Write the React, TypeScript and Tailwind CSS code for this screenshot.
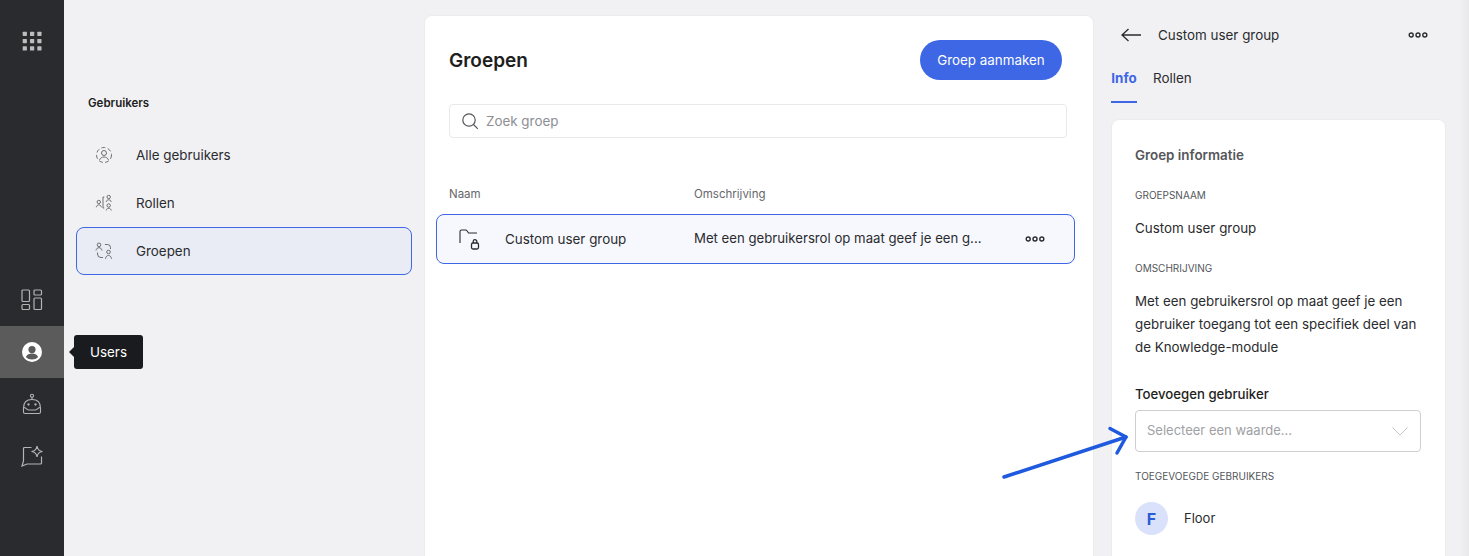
const FONT = "font-['Inter','Liberation_Sans',sans-serif]";

function Dots({ className = "" }: { className?: string }) {
  return (
    <svg width="20" height="6" viewBox="0 0 20 6" fill="none" stroke="#2a2b2e" strokeWidth="1.4" className={className}>
      <circle cx="3.2" cy="3" r="2" />
      <circle cx="10" cy="3" r="2" />
      <circle cx="16.8" cy="3" r="2" />
    </svg>
  );
}

function GridIcon() {
  return (
    <svg width="20" height="20" viewBox="0 0 20 20" fill="#bdbdbd">
      {[0, 7.3, 14.6].flatMap((y) =>
        [0, 7.3, 14.6].map((x) => <rect key={`${x}-${y}`} x={x + 0.7} y={y + 0.7} width="4.2" height="4.2" rx="0.6" />)
      )}
    </svg>
  );
}

function DashboardIcon() {
  return (
    <svg width="22" height="22" viewBox="0 0 22 22" fill="none" stroke="#b4b4b4" strokeWidth="1.2">
      <rect x="1" y="1" width="7.5" height="11.5" rx="1" />
      <rect x="13" y="1" width="7.5" height="5" rx="1" />
      <rect x="1" y="15.5" width="7.5" height="5" rx="1" />
      <rect x="13" y="9" width="7.5" height="11.5" rx="1" />
    </svg>
  );
}

function UserIcon() {
  return (
    <svg width="20" height="20" viewBox="0 0 20 20">
      <circle cx="10" cy="10" r="10" fill="#fff" />
      <circle cx="10" cy="7.6" r="3.6" fill="#5b5b5c" />
      <path d="M3.8 15c1-2.5 3.4-3.5 6.2-3.5s5.2 1 6.2 3.5C14.7 16.7 12.5 17.5 10 17.5S5.3 16.7 3.8 15Z" fill="#5b5b5c" />
    </svg>
  );
}

function BotIcon() {
  return (
    <svg width="20" height="22" viewBox="0 0 20 22" fill="none" stroke="#b4b4b4" strokeWidth="1.1">
      <circle cx="10" cy="2.8" r="1.6" />
      <path d="M10 4.4V6.5" />
      <path d="M1.5 15c0-5.500 3.200-8.500 8.500-8.500s8.500 3 8.500 8.500v4a1.500 1.500 0 0 1-1.500 1.500H3A1.500 1.500 0 0 1 1.500 19Z" />
      <path d="M1.500 14.500c3 0 3 2.500 5.500 2.500h6c2.500 0 2.500-2.500 5.500-2.500" />
      <circle cx="6.500" cy="11.500" r="0.600" fill="#b4b4b4" />
      <circle cx="13.500" cy="11.500" r="0.600" fill="#b4b4b4" />
    </svg>
  );
}

function SparkChatIcon() {
  return (
    <svg width="22" height="22" viewBox="0 0 22 22" fill="none" stroke="#b4b4b4" strokeWidth="1.2">
      <path d="M10.500 2.500h-7a1 1 0 0 0-1 1V16L1 21l5-2h13.500a1 1 0 0 0 1-1v-6.500" />
      <path d="M16 1c.4 3.200 2.300 5.100 5.500 5.500-3.200.4-5.100 2.300-5.500 5.500-.4-3.200-2.300-5.100-5.500-5.500 3.200-.4 5.100-2.300 5.500-5.500Z" />
    </svg>
  );
}

function AllUsersIcon() {
  return (
    <svg width="18" height="18" viewBox="0 0 18 18" fill="none" stroke="#606165" strokeWidth="0.9">
      <circle cx="9" cy="9" r="7.500" strokeDasharray="4 2.500" />
      <circle cx="9" cy="7" r="2.500" />
      <path d="M4.500 14c.8-2 2.500-3 4.500-3s3.700 1 4.500 3" />
    </svg>
  );
}

function RolesIcon() {
  return (
    <svg width="18" height="18" viewBox="0 0 18 18" fill="none" stroke="#606165" strokeWidth="0.9">
      <circle cx="3.800" cy="8" r="1.700" />
      <path d="M1.300 13.300c.3-1.600 1.200-2.400 2.500-2.400s2.200.8 2.500 2.400" />
      <path d="M9.300 3H8v11h1.300" />
      <circle cx="13.700" cy="3" r="1.700" />
      <path d="M11.200 8c.3-1.500 1.200-2.200 2.500-2.200s2.200.7 2.500 2.200" />
      <circle cx="13.700" cy="11.500" r="1.700" />
      <path d="M11.200 16.500c.3-1.500 1.200-2.200 2.500-2.200s2.200.7 2.500 2.200" />
    </svg>
  );
}

function GroupsIcon() {
  return (
    <svg width="18" height="18" viewBox="0 0 18 18" fill="none" stroke="#606165" strokeWidth="0.9">
      <circle cx="4" cy="2.800" r="1.800" />
      <path d="M1 8.500C1.300 6.500 2.500 5.700 4 5.700s2.700.8 3 2.800" />
      <circle cx="13.500" cy="10" r="1.800" />
      <path d="M10.500 16.800c.3-2.200 1.500-3.300 3-3.300s2.700 1.100 3 3.300" />
      <path d="M10 2.500h2.500a3 3 0 0 1 3 3V7" />
      <path d="M2.500 10.500V12a3.500 3.500 0 0 0 3.500 3.500h2" />
    </svg>
  );
}

function FolderLockIcon() {
  return (
    <svg width="22" height="22" viewBox="0 0 22 22" fill="none" stroke="#2a2b2e" strokeWidth="1.100">
      <path d="M1 15V3.500A1.500 1.500 0 0 1 2.500 2h4.200c.6 0 1 .3 1.300.8L9.500 5H18" />
      <rect x="12.500" y="15" width="7" height="6" rx="1.500" strokeWidth="1.300" />
      <path d="M14.200 15v-1.500a1.800 1.800 0 0 1 3.600 0V15" strokeWidth="1.300" />
    </svg>
  );
}

const NAV_ITEMS = [
  { label: "Alle gebruikers", icon: <AllUsersIcon /> },
  { label: "Rollen", icon: <RolesIcon /> },
  { label: "Groepen", icon: <GroupsIcon />, active: true },
];

function App() {
  return (
    <div className={`${FONT} relative flex h-[556px] w-[1469px] overflow-hidden bg-[#f1f1f4] text-[#2a2b2e]`}>
      {/* Rail */}
      <aside className="relative flex w-16 shrink-0 flex-col items-center bg-[#2a2b2e]">
        <div className="mt-[31px]">
          <GridIcon />
        </div>
        <div className="mt-[223px] flex h-[52px] w-full items-center justify-center">
          <DashboardIcon />
        </div>
        <div className="flex h-[52px] w-full items-center justify-center bg-[#5b5b5c]">
          <UserIcon />
        </div>
        <div className="flex h-[52px] w-full items-center justify-center">
          <BotIcon />
        </div>
        <div className="flex h-[52px] w-full items-center justify-center">
          <SparkChatIcon />
        </div>

        <div className="absolute left-[74px] top-[335px] z-10 flex h-[34px] w-[69px] items-center justify-center rounded-[3px] bg-[#1a1b1e] text-[13.4px] text-white">
          <span className="absolute -left-[5px] top-[12px] h-0 w-0 border-y-[5px] border-r-[5px] border-y-transparent border-r-[#1a1b1e]" />
          Users
        </div>
      </aside>

      {/* Section nav */}
      <nav className="w-[360px] shrink-0 pl-3 pr-3">
        <div className="pl-3 pt-[95px] text-[11.5px] leading-4 font-semibold text-[#1d1e20]">Gebruikers</div>
        <ul className="mt-[20px] flex flex-col">
          {NAV_ITEMS.map((item) => (
            <li
              key={item.label}
              className={`flex h-12 items-center gap-[23px] rounded-lg border pl-[18px] text-[13.4px] ${
                item.active ? "border-[#3d67e5] bg-[#e9ecf5]" : "border-transparent"
              }`}
            >
              {item.icon}
              {item.label}
            </li>
          ))}
        </ul>
      </nav>

      {/* Groups card */}
      <main className="mt-[15px] w-[670px] shrink-0 rounded-t-lg border border-b-0 border-[#ececee] bg-white px-3">
        <div className="flex items-center justify-between pl-3 pr-[19px] pt-[24px]">
          <h1 className="mt-[2px] text-[19px] leading-7 font-semibold text-[#1d1e20]">Groepen</h1>
          <button type="button" className="h-10 w-[142px] rounded-full bg-[#3d67e5] text-[13.4px] text-white">
            Groep aanmaken
          </button>
        </div>
        <div className="mx-3 mt-[24px] mr-[14px] flex h-[34px] items-center gap-[7px] rounded border border-[#e9e9eb] pl-[11px] text-[13.4px] text-[#8d8e92]">
          <svg width="18" height="18" viewBox="0 0 18 18" fill="none" stroke="#55565a" strokeWidth="1.200">
            <circle cx="8" cy="8" r="6.200" />
            <path d="m12.500 12.500 4.300 4.300" />
          </svg>
          Zoek groep
        </div>
        <div className="mt-[48px] flex pl-3 text-[11.500px] leading-4 text-[#66676b]">
          <span className="w-[245px]">Naam</span>
          <span>Omschrijving</span>
        </div>
        <div className="-ml-px mr-[6px] mt-[12px] flex h-[50px] items-center rounded-lg border border-[#3d67e5] bg-[#f7f8fe] pl-[22px] text-[13.4px]">
          <FolderLockIcon />
          <span className="ml-[24px] w-[189px]">Custom user group</span>
          <span className="w-[290px] whitespace-nowrap text-[13.2px]">Met een gebruikersrol op maat geef je een g...</span>
          <Dots className="ml-[41px]" />
        </div>
      </main>

      {/* Details panel */}
      <section className="flex-1 pl-[17px] pr-[23px]">
        <div className="flex items-center pt-[26px]">
          <svg width="20" height="14" viewBox="0 0 20 14" fill="none" stroke="#2a2b2e" strokeWidth="1.300" className="ml-[10px]">
            <path d="M20 7H1M7.500 1 1 7l6.500 6" />
          </svg>
          <span className="ml-[17px] text-[13.4px] leading-[18px]">Custom user group</span>
          <Dots className="ml-auto mr-[18px]" />
        </div>
        <div className="mt-[19px] flex gap-4 text-[13.4px]">
          <span className="flex h-10 w-[26px] items-start justify-center border-b-2 border-[#3d67e5] pt-[6px] leading-[18px] font-bold text-[#3d67e5]">
            Info
          </span>
          <span className="pt-[6px] leading-[18px]">Rollen</span>
        </div>
        <div className="mt-[16px] h-[440px] rounded-t-lg border border-[#ececee] bg-white pl-[23px] pr-6">
          <div className="pt-[27px] text-[13.4px] leading-4 font-semibold text-[#55565a]">Groep informatie</div>
          <div className="mt-[26px] text-[10px] leading-3 text-[#55565a]">GROEPSNAAM</div>
          <div className="mt-[18px] text-[13.4px] leading-[18px]">Custom user group</div>
          <div className="mt-[25px] text-[10px] leading-3 text-[#55565a]">OMSCHRIJVING</div>
          <p className="mt-[16px] text-[13.35px] leading-[23px]">
            Met een gebruikersrol op maat geef je een gebruiker toegang tot een specifiek deel van de Knowledge-module
          </p>
          <div className="mt-[26px] text-[13.2px] leading-[18px] font-medium text-[#1d1e20]">Toevoegen gebruiker</div>
          <div className="mt-[7px] flex h-[42px] items-center justify-between rounded border border-[#cfcfd2] pl-[11px] pr-3 text-[13px] text-[#a0a1a5]">
            Selecteer een waarde...
            <svg width="16" height="9" viewBox="0 0 16 9" fill="none" stroke="#c4c5c8" strokeWidth="1">
              <path d="m.5.5 7.500 7.500 7.500-7.500" />
            </svg>
          </div>
          <div className="mt-[18px] text-[10px] leading-3 text-[#55565a]">TOEGEVOEGDE GEBRUIKERS</div>
          <div className="mt-[20px] flex items-center gap-4 text-[13px]">
            <span className="flex size-[33px] items-center justify-center rounded-full bg-[#d9e2fa] text-base font-bold text-[#2b5bd7]">
              F
            </span>
            Floor
          </div>
        </div>
      </section>

      <div className="absolute top-0 right-0 h-full w-[10px] bg-gradient-to-r from-transparent to-[#e9e9eb]" />

      {/* Annotation arrow */}
      <svg className="absolute left-[1000px] top-[425px]" width="130" height="56" viewBox="0 0 130 56" fill="none" stroke="#1f5ade" strokeWidth="3.500" strokeLinecap="round" strokeLinejoin="round">
        <path d="M4 52 126 12" />
        <path d="M110 3.500 126 12 117 28" />
      </svg>
    </div>
  );
}

export default App;
